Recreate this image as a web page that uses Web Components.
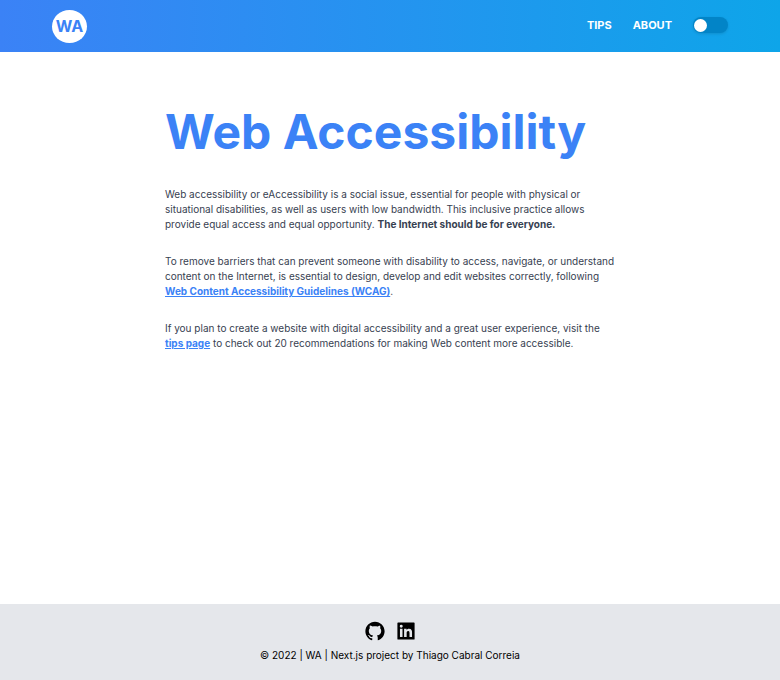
<!DOCTYPE html>
<html lang="en">
<head>
<meta charset="utf-8">
<meta name="viewport" content="width=device-width, initial-scale=1">
<title>Web Accessibility</title>
<style>
  body { margin: 0; background: #fff; font-family: Inter, "Liberation Sans", sans-serif; font-size: 10px; line-height: 15px; color: #374151; }
</style>
</head>
<body>
<wa-page></wa-page>
<script>
const define = (name, html) => {
  const template = document.createElement('template');
  template.innerHTML = html;
  customElements.define(name, class extends HTMLElement {
    constructor() {
      super();
      this.attachShadow({ mode: 'open' }).append(template.content.cloneNode(true));
    }
  });
};

define('wa-logo', `
  <style>
    :host { display: block; }
    a { display: grid; place-items: center; width: 35px; height: 33px; border-radius: 50%; background: #fff; color: #3b82f6; font-size: 16px; font-weight: 700; line-height: 1; text-decoration: none; }
  </style>
  <a href="#home">WA</a>`);

define('wa-toggle', `
  <style>
    :host { display: block; }
    input { appearance: none; display: flex; align-items: center; box-sizing: border-box; width: 35px; height: 16px; margin: 0; padding: 0 1px; border-radius: 8px; background: #0284c7; box-shadow: 0 1px 3px rgb(0 0 0 / .12); cursor: pointer; }
    input::before { content: ""; width: 13px; height: 13px; border-radius: 50%; background: #fff; }
    input:checked { justify-content: flex-end; }
  </style>
  <input type="checkbox" role="switch" aria-label="Dark mode">`);

define('wa-header', `
  <style>
    :host { display: block; background: linear-gradient(to right, #3b82f6, #0ea5e9); }
    header { display: flex; align-items: center; justify-content: space-between; height: 52px; padding: 0 52px; }
    nav { display: flex; align-items: center; gap: 21px; padding-bottom: 2px; }
    nav a { color: #fff; font-size: 11px; font-weight: 700; text-decoration: none; }
  </style>
  <header>
    <wa-logo></wa-logo>
    <nav><a href="#tips">TIPS</a><a href="#about">ABOUT</a><wa-toggle></wa-toggle></nav>
  </header>`);

define('wa-article', `
  <style>
    :host { display: block; }
    main { max-width: 450px; margin: 0 auto; padding: 52px 0; }
    ::slotted(h1) { margin: 0 0 27px; color: #3b82f6; font-size: 48px; line-height: 56px; font-weight: 700; white-space: nowrap; }
    ::slotted(p) { margin: 0 0 22px; }
  </style>
  <main><slot></slot></main>`);

define('wa-footer', `
  <style>
    :host { display: block; background: #e5e7eb; color: #000; }
    footer { display: flex; flex-direction: column; align-items: center; gap: 6px; padding: 16px 16px 17px; }
    nav { display: flex; gap: 9px; }
    a { display: block; color: inherit; }
    svg { display: block; width: 22px; height: 22px; fill: currentColor; }
    p { margin: 0; }
  </style>
  <footer>
    <nav>
      <a href="#github" aria-label="GitHub"><svg viewBox="0 0 1024 1024" aria-hidden="true"><path d="M511.6 76.3C264.3 76.2 64 276.4 64 523.5 64 718.9 189.3 885 363.8 946c23.5 5.9 19.9-10.8 19.9-22.2v-77.5c-135.7 15.9-141.2-73.9-150.3-88.9C215 726 171.5 718 184.5 703c30.9-15.9 62.4 4 98.9 57.9 26.4 39.1 77.9 32.5 104 26 5.7-23.5 17.9-44.5 34.7-60.8-140.6-25.2-199.2-111-199.2-213 0-49.5 16.3-95 48.3-131.7-20.4-60.5 1.9-112.3 4.9-120 58.1-5.2 118.5 41.6 123.2 45.3 33-8.9 70.7-13.6 112.9-13.6 42.4 0 80.2 4.9 113.5 13.9 11.3-8.6 67.3-48.8 121.3-43.9 2.9 7.7 24.7 58.3 5.5 118 32.4 36.8 48.9 82.7 48.9 132.3 0 102.2-59 188.1-200 212.9a127.5 127.5 0 0 1 38.1 91v112.5c.8 9 0 17.9 15 17.9 177.1-59.7 304.6-227 304.6-424.1 0-247.2-200.4-447.3-447.5-447.3z"/></svg></a>
      <a href="#linkedin" aria-label="LinkedIn"><svg viewBox="0 0 1024 1024" aria-hidden="true"><path d="M880 112H144c-17.700 0-32 14.300-32 32v736c0 17.700 14.300 32 32 32h736c17.700 0 32-14.300 32-32V144c0-17.700-14.300-32-32-32zM349.300 793.700H230.600V411.900h118.700v381.800zm-59.300-434a68.800 68.800 0 1 1 68.800-68.800c-.1 38-30.900 68.800-68.800 68.800zm503.700 434H675.100V608c0-44.300-.8-101.200-61.700-101.200-61.700 0-71.200 48.200-71.200 98v188.900H423.700V411.900h113.800v52.200h1.600c15.800-30 54.500-61.700 112.300-61.700 120.200 0 142.300 79.100 142.300 181.900v209.400z"/></svg></a>
    </nav>
    <p>© 2022 | WA | Next.js project by Thiago Cabral Correia</p>
  </footer>`);

define('wa-page', `
  <style>
    :host { display: flex; flex-direction: column; min-height: 100vh; }
    wa-article { flex: 1; }
    strong { font-weight: 700; }
    p a { color: #3b82f6; font-weight: 700; text-decoration: underline; }
  </style>
  <wa-header></wa-header>
  <wa-article>
    <h1>Web Accessibility</h1>
    <p>Web accessibility or eAccessibility is a social issue, essential for people with physical or situational disabilities, as well as users with low bandwidth. This inclusive practice allows provide equal access and equal opportunity. <strong>The Internet should be for everyone.</strong></p>
    <p>To remove barriers that can prevent someone with disability to access, navigate, or understand content on the Internet, is essential to design, develop and edit websites correctly, following <a href="#wcag">Web Content Accessibility Guidelines (WCAG)</a>.</p>
    <p>If you plan to create a website with digital accessibility and a great user experience, visit the <a href="#tips">tips page</a> to check out 20 recommendations for making Web content more accessible.</p>
  </wa-article>
  <wa-footer></wa-footer>`);
</script>
</body>
</html>
